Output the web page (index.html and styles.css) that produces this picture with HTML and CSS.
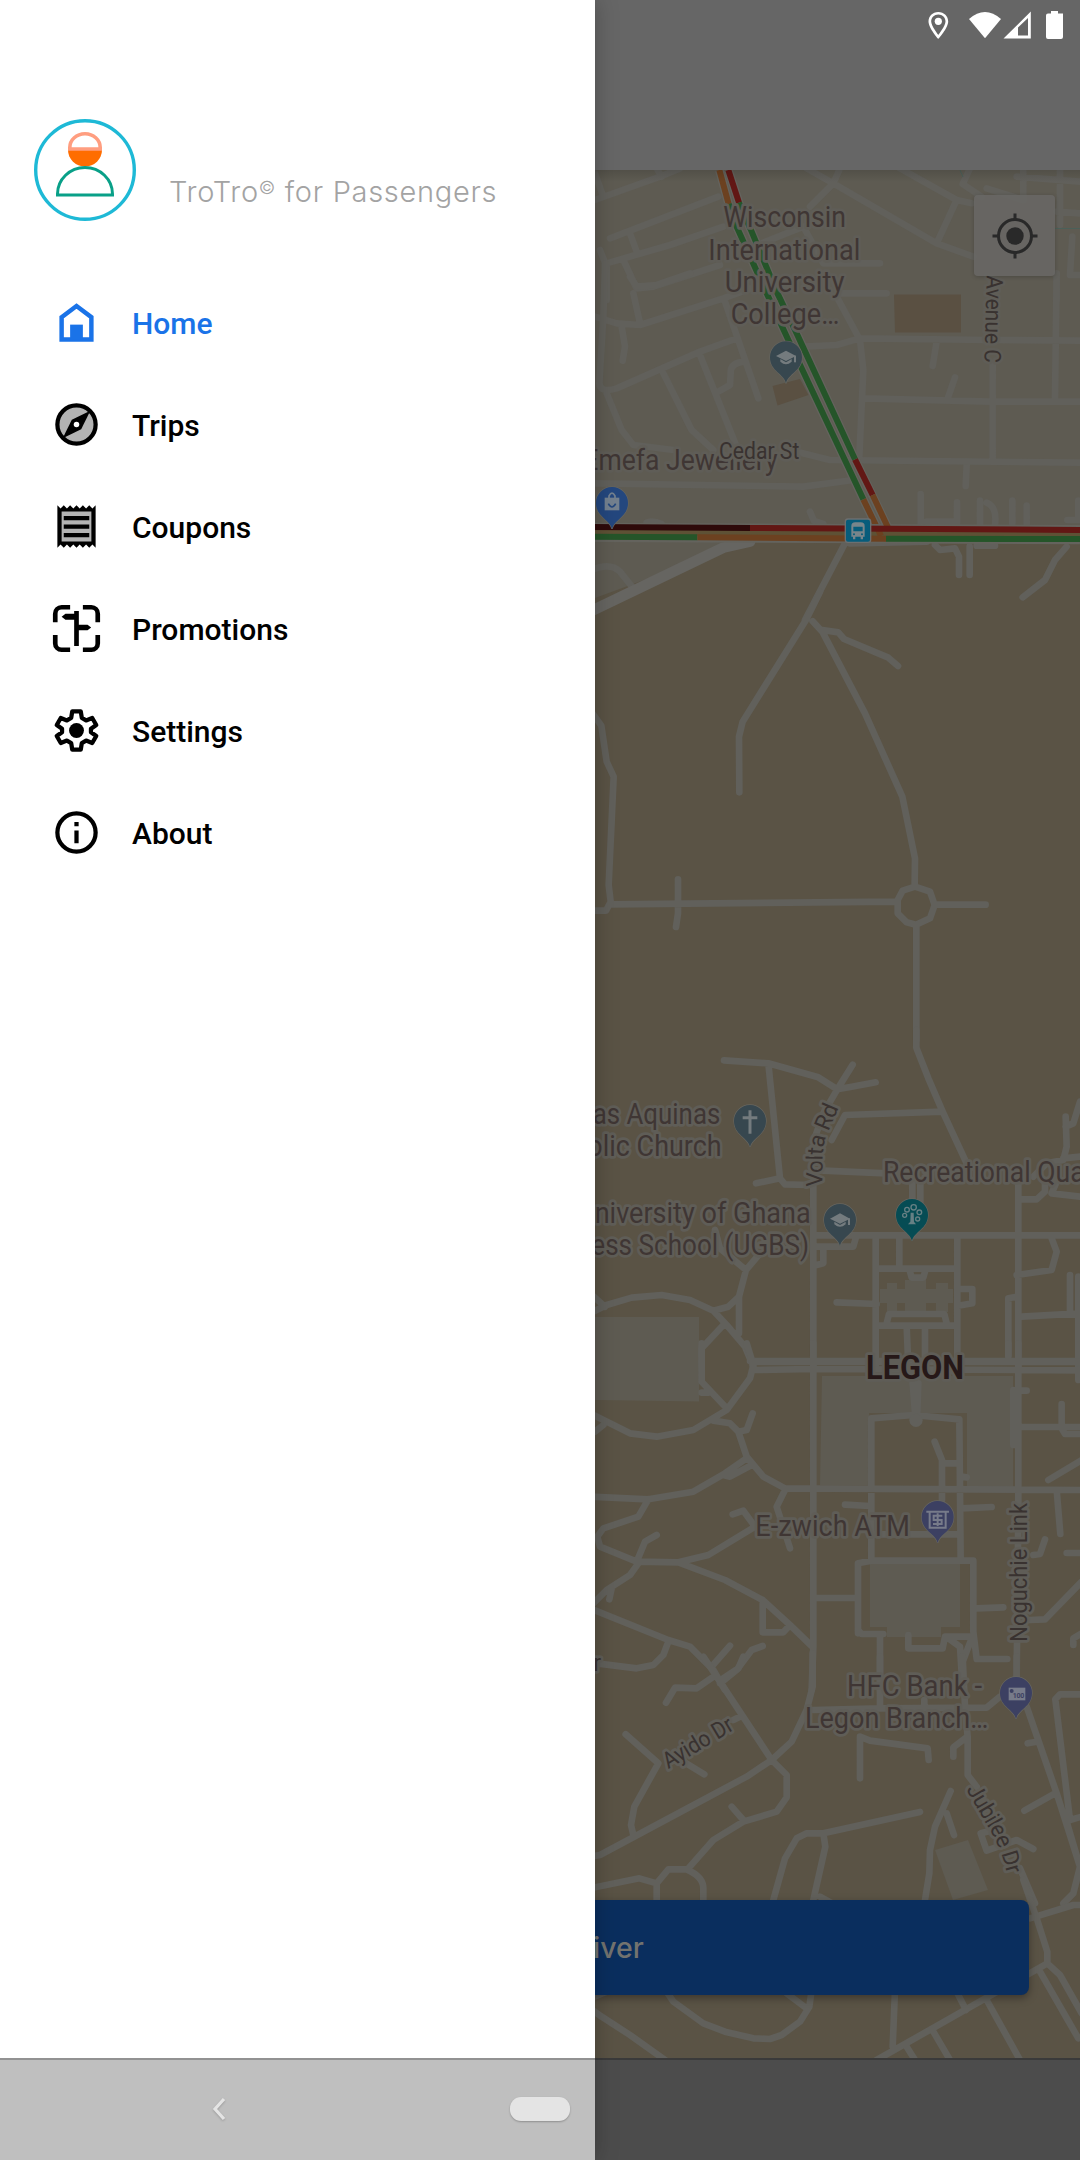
FILE: index.html
```html
<!DOCTYPE html>
<html lang="en">
<head>
<meta charset="utf-8">
<title>TroTro for Passengers</title>
<link rel="stylesheet" href="styles.css">
</head>
<body>
<div class="screen">
  <header class="app-bar">
    <svg class="status-icons" viewBox="0 0 145 45" width="145" height="45" fill="#fff">
      <path fill-rule="evenodd" d="M13.300 12C7.500 12 3.500 16.400 3.500 21.500C3.500 28 13.300 39 13.300 39S23.200 28 23.200 21.500C23.200 16.400 19.100 12 13.300 12ZM13.300 14.600C17.500 14.600 20.500 17.700 20.500 21.600C20.500 26 13.300 35 13.300 35S6.200 26 6.200 21.600C6.200 17.700 9.200 14.600 13.300 14.600Z"/>
      <circle cx="13.300" cy="21.300" r="3.600"/>
      <path d="M44 19Q60 5 76 19L60 38.300Z"/>
      <path fill-rule="evenodd" d="M78.500 38.500L105.800 11.500V38.500ZM93 27.500V35.500H103V18Z"/>
      <path d="M126 11h7v2.500h5V37q0 2-2 2h-13q-2 0-2-2V15.500q0-2 2-2h3z"/>
    </svg>
  </header>

  <main class="map">
    <svg class="map-art" viewBox="590 170 490 1888" width="490" height="1888">
      <defs>
        <path id="pin" d="M0 78C-5 50-48 42-48 0A48 48 0 1 1 48 0C48 42 5 50 0 78Z"/>
        <g id="cap"><path d="M-30-4L0-20L30-4L0 11Z"/><path d="M-17 5V13Q0 28 17 13V5L0 15Z"/><path d="M24-5H30V15H24Z"/></g>
        <path id="volta" d="M697 470L698 380Q699 345 708 322L752 218"/>
        <path id="jubilee" d="M1128 388L1208 525Q1230 565 1243 610L1262 680"/>
      </defs>
      <rect x="590" y="170" width="490" height="1888" fill="#5a5345"/>

      <!-- land parcels -->
      <g class="land">
        <path d="M590 170H1080V541H750L595 598H590Z"/>
        <path d="M595 1317H699V1401.500L595 1400Z"/>
        <path d="M822 1376H1013V1487H967V1413L869 1413V1485H820Z"/>
        <path d="M870 1563H960V1627H941V1637H887V1627H870Z"/>
        <path d="M935 1850L968 1840L988 1890L953 1900Z"/>
        <path d="M880 1289H953V1303H880ZM887 1283H897V1312H887ZM905 1280H926V1312H905ZM936 1283H948V1312H936Z"/>
      </g>
      <path d="M894 294.500H961V332.500H895ZM772.500 386L800 379L808.500 395L777.500 405.500Z" fill="#5a5042"/>

      <!-- roads, north-east quarter -->
      <g class="road" transform="translate(590 0) scale(.33333)">
        <path d="M0 605L210 530L270 505M15 520L40 590M200 505L215 530M60 715L385 590M50 790L240 735L400 680M120 700L140 755M30 750L50 800V900M100 780L140 865L190 860L390 795M650 505L730 550L1040 730L1150 770M750 505L730 550L660 620M440 760L640 680L700 790L870 790M930 505L1100 600L1040 730M1100 600L1145 610M1140 505L1118 552L1175 590M1190 565L1300 600M1300 505V600M1280 530L1470 545M1410 505V675M1400 635L1470 640M1447 710L1440 825L1470 825M1400 825V900"/>
      </g>
      <path d="M1055 228.500H1080M960 170L963 177" stroke="#4b6059" fill="none"/>
      <g class="road" transform="translate(590 280) scale(.33333)">
        <path d="M15 110L80 130L150 135L400 55L540 5M130 40L150 130M45-50L40 110L28 310Q30 340 80 325L330 215L440 175M120-10L140 20L200 15L300-20M95 140L105 200L98 242M405 65L505 355M220 280L305 450L370 510M330 225L440 500M50 340L95 450L130 495L250 510M460 245Q420 250 422 280L420 315L385 335M750 40H890M740 50L810 180L820 270L808 530M640 200L740 195L810 175L1200 180L1470 182M1040 185L1028 258M1095 292L1075 350M820 355L1200 365H1470M1400-20L1395 355M1208 250V540M620 515L720 540L1470 548M1130 555L1127 618M15 610L640 620L790 600M992 642V730M1101 667V730M1170 662V735M1190 668Q1222 680 1215 735M1267 662V730M1310 677V735M1010 725H1090M1432 720H1470M1465 662V720M660 695L672 723L700 732M170 728Q190 720 215 732M0 872Q60 845 90 875L130 925M765 790L645 1020M1035 795L1050 810L1095 805L1107 830V885M1139 800V885M1430 800L1395 840L1365 900L1298 952M1160 797H1215M780 790L1010 785"/>
        <path class="wide" d="M0 995L400 803L480 785"/>
      </g>

      <!-- roads, campus north -->
      <g class="road" transform="translate(590 600) scale(.33333)">
        <path d="M690-25L648 60L458 365L447 410L448 577M668 64L697 95L825 340L937 590L975 775L974 855M697 90L745 97L762 117L895 173L924 198M0 330L34 377L50 485L71 530L56 855L62 905L48 932H0M62 913L920 905M264 838V940L258 981M975 860L1020 875L1034 915L1020 955L978 974L950 967L923 940V900L938 872ZM1040 914H1187M979 980V1320"/>
      </g>
      <g class="road" transform="translate(590 1030) scale(.33333)">
        <path d="M979 0V53L1015 145L1058 245L1130 400M402 91L535 100L685 142L742 178L785 170L857 157M788 104L742 178L700 250L672 330M535 100L570 445L498 460M570 445L585 463L660 465M725 330L765 255L1058 245M700 422L890 430M670 470V1010M1427 260L1430 350L1420 390L1370 400L1330 440M1470 215L1450 280L1427 290M1420 385L1470 380M1365 450L1365 485L1340 508H1290M1400 455L1385 490L1470 500M967 460V520M991 460V520M1285 450V1010M670 616H1470M857 620V1010M1102 620V1010M928 620V710M865 716H1100M960 725L965 743H1000L1005 725M865 887H1100M890 880L897 852H1063L1070 880M950 890L955 1010M1005 890V1010M680 650H790L797 625M700 655V700L680 705M740 817L860 822M1105 777H1147V820L1105 827M1385 625L1400 665L1385 720L1280 735M1440 735V850M1255 975V805L1280 800M1295 860L1470 850M1465 740V1010M375 600L390 655L468 720L510 670M468 720L447 800V910M447 800L415 830L370 842M0 790L45 830M0 850L50 825L125 803L215 795L300 810L370 842L410 885L465 950L490 1010M400 885L335 955V1010M480 993H1470"/>
      </g>

      <!-- roads, campus centre and south -->
      <g class="road" transform="translate(590 1350) scale(.33333)">
        <path d="M670-20V890L665 1020M1285-20V480L1280 980M490 36H1470M490 60L670 57L1470 61M470-20L490 45L480 85L410 180L310 240L200 260L120 250L0 190M335-20V95L410 175M335 128H355M40 225L15 245M370 212L420 220L445 245L470 240L488 190M445 245L470 320L520 380L585 415L1470 420M485 345L420 380L400 375M470 325L405 370L310 425L175 448L0 440M175 448L145 500L40 535L22 560L30 590L140 635L265 637L405 690L518 750L600 825L665 888M265 637L355 615L495 530L460 482L428 493M585 420L560 470L600 595M140 635L165 575L200 555M145 640L120 675L50 720L0 770M65 715L58 748M0 775L235 870L300 890L370 960L405 1020M235 875L220 915L190 945L140 955L20 940M365 950L420 887M390 1000L440 960L485 900L518 888M518 750V847H580L600 825M844 630V205L970 195L1108 208L1112 630M968 100L977 215M985 100L981 215M1034 275L1056 330V450M1060 340H1105M765 464L840 468M850 553H1108M1115 475L1205 471M1115 380L1130 382M804 850V640L844 632H1150V845L1160 927L1252 927M804 840L815 852H880M670 744H800M955 855V895H1058L1065 860H1150M870 860V1020M1075 865L1110 890L1118 1020M1145 865L1120 930M1160 775L1240 772M1320 810L1365 808L1475 695M1330 615L1350 612L1365 568M1400 420L1411 552M1430 609H1470M1375 390L1475 330M1295 231H1470M1415 162V235L1425 252H1470M1465 60V90M1255-20V20M1275 122H1310M1270 120V285M1450 885V865L1475 850"/>
        <circle cx="978" cy="211" r="20" fill="#61605b"/>
      </g>
      <g class="road" transform="translate(590 1660) scale(.33333)">
        <path d="M340-10L380 50L545 300L590 345V412L560 455L460 485L370 540L295 625M370 50L320 85L255 83L228 128M400 55L445 25L460-10M545 300L470 350L30 585L0 590M545 300L605 245L650 150L668 80V-20M430 180L450 170M107 223L205 310L133 440L123 495L130 525M280 305L343 343M425 440L460 480M0 685L148 655L200 670V720M200 670L235 628H290Q340 650 340 685V720M670 150L870 145L1190 143L1230 110M870-10V145M1118-10L1125 140L1133 230V345L1160 380M810 355V230L840 242L1013 265L1016 300M1125 235L1090 262V290M1003 120V145M1280-10V50M1310 140L1400 400L1470 620L1450 700L1420 730M1395 400L1303 452M1313 250L1340 245M1470 103H1410L1396 118L1440 480L1475 470M1430 485L1470 620M1082 393L1035 500L1020 570L1018 640L1005 720M1070 460L1092 525M990 456L700 520H650L620 535L585 595L550 720M700 520L706 560L670 720M690 710L735 735M1290 625L1335 730M1330 567L1280 540L1190 572L1172 520L1200 513"/>
      </g>
      <g class="road" transform="translate(590 1880) scale(.33333)">
        <path d="M1300 0L1340 115L1372 215V250L1410 285L1475 400M1470 75H1450L1320 115M1372 250L860 540M1350 275L1465 475M1190 360L1290 540M1030 455L1080 540M950 500L975 540M1100 335L1128 390M915 330L908 500M0 385L35 410L120 465L225 540M230 335L250 365L340 430L405 455L490 475L540 477L575 465L630 425L658 380L665 330M590 340L650 385M0 355L50 335"/>
      </g>

      <!-- traffic -->
      <g class="traffic" transform="translate(590 280) scale(.33333)">
        <path class="casing" d="M388-330L416-228L440-160L530 40L595 180L820 658L873 768M415-330L447-232L485-145L560 35L620 160L795 538L895 745"/>
        <path class="o" d="M388-330L416-228M820 658L873 768"/>
        <path class="r" d="M415-330L447-232M795 538L848 645"/>
        <path class="g" d="M416-228L440-160L530 40L595 180L820 658M447-232L485-145L560 35L620 160L795 538"/>
        <path class="casing main" d="M0 757L1470 764"/>
        <path d="M0 757L1470 764" stroke="#5e5135"/>
        <path class="o" d="M848 645L895 745M865 750L873 768"/>
        <path d="M0 741L480 744" stroke="#2e0a0a"/>
        <path class="r" d="M480 744L1470 750"/>
        <path class="g" d="M0 770L322 772M888 776L1470 777"/>
        <path class="o" d="M322 772L888 776"/>
      </g>

      <!-- place labels -->
      <g class="label" transform="translate(590 0) scale(.33333)">
        <text x="400" y="682" textLength="368" lengthAdjust="spacingAndGlyphs">Wisconsin</text>
        <text x="355" y="779" textLength="456" lengthAdjust="spacingAndGlyphs">International</text>
        <text x="404" y="875" textLength="360" lengthAdjust="spacingAndGlyphs">University</text>
        <text x="422" y="971" textLength="326" lengthAdjust="spacingAndGlyphs">College…</text>
      </g>
      <g class="label" transform="translate(590 280) scale(.33333)">
        <text x="-20" y="570" textLength="583" lengthAdjust="spacingAndGlyphs">Emefa Jewellery</text>
        <text class="street" x="387" y="538" textLength="241" lengthAdjust="spacingAndGlyphs">Cedar St</text>
        <text class="street" transform="translate(1190 -14) rotate(91.500)" textLength="262" lengthAdjust="spacingAndGlyphs">Avenue C</text>
      </g>
      <g class="label" transform="translate(590 1030) scale(.33333)">
        <text x="8" y="281" textLength="383" lengthAdjust="spacingAndGlyphs">as Aquinas</text>
        <text x="-8" y="377" textLength="403" lengthAdjust="spacingAndGlyphs">olic Church</text>
        <text x="14" y="578" textLength="648" lengthAdjust="spacingAndGlyphs">niversity of Ghana</text>
        <text x="4" y="674" textLength="653" lengthAdjust="spacingAndGlyphs">ess School (UGBS)</text>
        <text x="879" y="455" textLength="605" lengthAdjust="spacingAndGlyphs">Recreational Qua</text>
        <text class="street volta"><textPath href="#volta">Volta Rd</textPath></text>
      </g>
      <g class="label" transform="translate(590 1350) scale(.33333)">
        <text class="district" x="828" y="87" textLength="294" lengthAdjust="spacingAndGlyphs">LEGON</text>
        <text x="496" y="557" textLength="464" lengthAdjust="spacingAndGlyphs">E-zwich ATM</text>
        <text class="street" transform="translate(1311 875) rotate(-90)" textLength="416" lengthAdjust="spacingAndGlyphs">Noguchie Link</text>
        <text class="street" x="10" y="963">r</text>
      </g>
      <g class="label" transform="translate(590 1660) scale(.33333)">
        <text x="771" y="107" textLength="405" lengthAdjust="spacingAndGlyphs">HFC Bank -</text>
        <text x="645" y="203" textLength="550" lengthAdjust="spacingAndGlyphs">Legon Branch…</text>
        <text class="street" transform="translate(235 328) rotate(-31)" textLength="234" lengthAdjust="spacingAndGlyphs">Ayido Dr</text>
        <text class="street jubilee"><textPath href="#jubilee">Jubilee Dr</textPath></text>
      </g>

      <!-- place markers -->
      <g class="markers" transform="translate(590 280) scale(.33333)">
        <g transform="translate(588 232)"><use href="#pin" fill="#37474f"/><use href="#cap" fill="#747b7e"/></g>
        <g transform="translate(66 669)"><use href="#pin" fill="#24477e"/><path d="M-22-16H22V22H-22Z" fill="#74818f"/><path d="M-9-14V-21Q0-38 9-21V-14" fill="none" stroke="#74818f" stroke-width="5"/><path d="M-11 2Q0 22 11 2" fill="none" stroke="#24477e" stroke-width="5"/></g>
        <g transform="translate(804 753)"><rect x="-38" y="-36" width="76" height="70" rx="8" fill="#075c7b" stroke="#6c6f70" stroke-width="4"/><path fill="#78858b" fill-rule="evenodd" d="M-20-15Q-20-26-8-26H8Q20-26 20-15V17H15V25H8V17H-8V25H-15V17H-20ZM-14-13V1H14V-13ZM-12 7A3 3 0 1 0-12 13A3 3 0 1 0-12 7ZM12 7A3 3 0 1 0 12 13A3 3 0 1 0 12 7Z"/></g>
      </g>
      <g class="markers" transform="translate(590 1030) scale(.33333)">
        <g transform="translate(480 273)"><use href="#pin" fill="#37474f"/><path d="M0-32V38M-22-10H22" stroke="#747b7e" stroke-width="9"/></g>
        <g transform="translate(750 570)"><use href="#pin" fill="#37474f"/><use href="#cap" fill="#747b7e"/></g>
        <g transform="translate(966 555)"><use href="#pin" fill="#064c54"/><g fill="none" stroke="#668084" stroke-width="4"><circle cx="-22" cy="1" r="6"/><circle cx="-15" cy="-16" r="7"/><circle cx="5" cy="-23" r="8"/><circle cx="22" cy="-8" r="7"/><circle cx="17" cy="12" r="6"/></g><path d="M-4-7H5L6 20L12 28H-12L-5 20Z" fill="#668084"/></g>
      </g>
      <g class="markers" transform="translate(590 1350) scale(.33333)">
        <g transform="translate(1043 501)"><use href="#pin" fill="#3c4062"/><path d="M-34-16H34M-24-16V32H24V-16M14-4H-12V9H12V21H-14M0-11V27" fill="none" stroke="#777b8a" stroke-width="6"/></g>
      </g>
      <g class="markers" transform="translate(590 1660) scale(.33333)">
        <g transform="translate(1278 99)"><use href="#pin" fill="#3c4062"/><rect x="-22" y="-16" width="50" height="38" fill="#777b8a"/><circle cx="-13" cy="-6" r="6" fill="#3c4062"/><text class="note" x="-10" y="16" textLength="35">100</text></g>
      </g>
    </svg>

    <button class="locate" aria-label="My location">
      <svg viewBox="0 0 46 46" width="46" height="46" fill="none" stroke="#292929">
        <circle cx="23" cy="23" r="16.500" stroke-width="3"/>
        <circle cx="23" cy="23" r="8.700" fill="#292929" stroke="none"/>
        <path d="M23 .5V7M23 39V45.500M.5 23H7M39 23H45.500" stroke-width="3"/>
      </svg>
    </button>
    <button class="driver">iver</button>
  </main>

  <aside class="drawer">
    <div class="profile">
      <svg class="avatar" viewBox="0 0 102 102" width="102" height="102" fill="none">
        <circle cx="51" cy="51" r="49.300" stroke="#1eb9d6" stroke-width="3.400"/>
        <path d="M34 31V28H68V31A17 16.500 0 0 1 34 31Z" fill="#ff6d00"/>
        <path d="M35.800 30V28.500A15.200 13.800 0 0 1 66.200 28.500V30Z" fill="#fff" stroke="#ff9e80" stroke-width="3.600"/>
        <path d="M23.500 76V75A27.500 26.500 0 0 1 78.500 75V76Z" stroke="#09a088" stroke-width="3"/>
      </svg>
      <h1 class="brand">TroTro<span class="mark">©</span> for Passengers</h1>
    </div>
    <nav class="menu">
      <a class="item active"><svg viewBox="0 0 24 24" width="51" height="51"><path d="M5 9.500L12 4.200L19 9.500V20H5Z" fill="none" stroke="currentColor" stroke-width="2.100"/><path d="M9 13H15V20H9Z" fill="currentColor"/></svg><span>Home</span></a>
      <a class="item"><svg viewBox="0 0 24 24" width="51" height="51"><circle cx="12" cy="12" r="9" fill="#b3b3b3" stroke="#000" stroke-width="2"/><path d="M5.500 18.500L9.800 9.800L18.500 5.500L14.200 14.200Z"/><circle cx="12" cy="12" r="1.300" fill="#fff"/></svg><span>Trips</span></a>
      <a class="item"><svg viewBox="0 0 24 24" width="51" height="51"><path d="M4 4H20V20H4Z" fill="#b3b3b3"/><path fill-rule="evenodd" d="M19.500 3.500L18 2l-1.500 1.500L15 2l-1.500 1.500L12 2l-1.500 1.500L9 2 7.500 3.500 6 2 4.500 3.500 3 2v20l1.500-1.500L6 22l1.500-1.500L9 22l1.500-1.500L12 22l1.500-1.500L15 22l1.500-1.500L18 22l1.500-1.500L21 22V2zM19 19.100H5V4.900h14zM6 15h12v2H6zm0-4h12v2H6zm0-4h12v2H6z"/></svg><span>Coupons</span></a>
      <a class="item"><svg viewBox="0 0 24 24" width="51" height="51"><path d="M2 9V5A3 3 0 0 1 5 2H9M15 2H19A3 3 0 0 1 22 5V9M22 15V19A3 3 0 0 1 19 22H15M9 22H5A3 3 0 0 1 2 19V15" fill="none" stroke="#000" stroke-width="2.200"/><path d="M10.900 3.800H13.100V10.200H17.200L18.900 11.500L17.200 12.800H13.100V20.200H10.900V7.900H6.800L5 6.500L6.800 5.100H10.900Z"/></svg><span>Promotions</span></a>
      <a class="item"><svg viewBox="0 0 24 24" width="51" height="51"><path d="M10 3H14L14.500 6.100L16.500 7.250L19.400 6.100L21.300 9.400L18.800 11.200V12.800L21.300 14.600L19.400 17.900L16.500 16.750L14.500 17.900L14 21H10L9.500 17.900L7.500 16.750L4.600 17.900L2.700 14.600L5.200 12.800V11.200L2.700 9.400L4.600 6.100L7.500 7.250L9.500 6.100Z" fill="none" stroke="#000" stroke-width="2" stroke-linejoin="round"/><circle cx="12" cy="12" r="3.500"/></svg><span>Settings</span></a>
      <a class="item"><svg viewBox="0 0 24 24" width="51" height="51"><circle cx="12" cy="12" r="9" fill="none" stroke="#000" stroke-width="2"/><path d="M11 7h2v2h-2zM11 11h2v6h-2z"/></svg><span>About</span></a>
    </nav>
  </aside>

  <footer class="system-nav">
    <svg class="back" viewBox="0 0 16 26" width="16" height="26"><path d="M13 3L4 13L13 23" fill="none" stroke="#e4e4e4" stroke-width="3.200"/></svg>
    <span class="home-pill"></span>
  </footer>
</div>
</body>
</html>
```
FILE: styles.css
```css
* { box-sizing: border-box; }

body {
  margin: 0;
  font-family: Roboto, sans-serif;
}

.screen {
  position: relative;
  width: 1080px;
  height: 2160px;
  overflow: hidden;
  background: #666;
}

.app-bar {
  display: flex;
  justify-content: flex-end;
  height: 170px;
  padding-right: 10px;
  background: #666;
}

.map {
  position: relative;
  display: flex;
  flex-direction: column;
  justify-content: flex-end;
  height: 1888px;
  padding: 0 51px 63px;
}

.map-art {
  position: absolute;
  top: 0;
  right: 0;
}

.map::before {
  content: "";
  position: absolute;
  z-index: 1;
  inset: 0 0 auto;
  height: 12px;
  background: linear-gradient(rgba(0, 0, 0, 0.13), transparent);
}

.land { fill: #5e5b52; }

.road path {
  fill: none;
  stroke: #61605b;
  stroke-width: 20;
  stroke-linecap: round;
  stroke-linejoin: round;
}

.road .wide { stroke-width: 32; stroke: #666561; }

.traffic path { fill: none; stroke-width: 18; }
.traffic .casing { stroke: #64635d; stroke-width: 26; }
.traffic .main { stroke-width: 58; }
.traffic .o { stroke: #6c4120; }
.traffic .r { stroke: #621714; }
.traffic .g { stroke: #255529; }

.label text {
  font-size: 86px;
  fill: #3f3634;
  stroke: #5f5d57;
  stroke-width: 17px;
  stroke-linejoin: round;
  paint-order: stroke;
}

.label .street { font-size: 69px; fill: #393230; }
.label .volta { font-size: 68px; letter-spacing: -1px; }
.label .jubilee { font-size: 68px; letter-spacing: -2px; }

.label .district {
  font-size: 98px;
  font-weight: 700;
  fill: #261818;
}

.markers use[href="#pin"] { stroke: #66655f; stroke-width: 4px; paint-order: stroke; }
.markers .note { font-size: 21px; font-weight: 700; fill: #3c4062; }

.locate {
  position: absolute;
  top: 25px;
  right: 25px;
  display: flex;
  align-items: center;
  justify-content: center;
  width: 81px;
  height: 81px;
  padding: 0;
  border: 0;
  border-radius: 4px;
  background: rgba(104, 103, 101, 0.85);
  box-shadow: 0 1px 4px rgba(0, 0, 0, 0.2);
}

.driver {
  position: relative;
  height: 95px;
  padding: 0 0 0 542px;
  border: 0;
  border-radius: 8px;
  background: #0a2e5e;
  color: #73736f;
  font: 500 28.500px Inter, sans-serif;
  text-align: left;
  box-shadow: 0 3px 8px rgba(0, 0, 0, 0.35);
}

.drawer {
  position: absolute;
  z-index: 2;
  top: 0;
  left: 0;
  width: 595px;
  height: 2160px;
  background: #fff;
  box-shadow: 0 0 22px rgba(0, 0, 0, 0.25);
}

.profile {
  display: flex;
  gap: 33px;
  height: 271px;
  padding: 119px 0 0 34px;
}

.brand {
  margin: 55px 0 0;
  color: #a3a3a3;
  font: 300 29px/36px Inter, sans-serif;
  letter-spacing: 0.7px;
  white-space: nowrap;
}

.mark {
  font-size: 18px;
  line-height: 0;
  vertical-align: 8px;
}

.menu { display: flex; flex-direction: column; }

.item {
  display: flex;
  align-items: center;
  gap: 30px;
  height: 102px;
  padding: 1px 0 0 51px;
  color: #000;
  font-size: 30px;
  font-weight: 500;
}

.item span { padding-top: 1px; }
.item.active { color: #1a73e8; }

.system-nav {
  position: relative;
  z-index: 3;
  height: 102px;
  display: flex;
  align-items: center;
  gap: 300px;
  padding: 0 0 2px 211px;
  border-top: 2px solid rgba(0, 0, 0, 0.23);
  background: rgba(0, 0, 0, 0.25);
}

.back { filter: drop-shadow(0 1px 1px rgba(0, 0, 0, 0.2)); }

.home-pill {
  width: 60px;
  height: 24px;
  margin-left: -17px;
  border-radius: 11px;
  background: #e4e4e4;
  box-shadow: 0 1px 2px rgba(0, 0, 0, 0.25);
}
```
